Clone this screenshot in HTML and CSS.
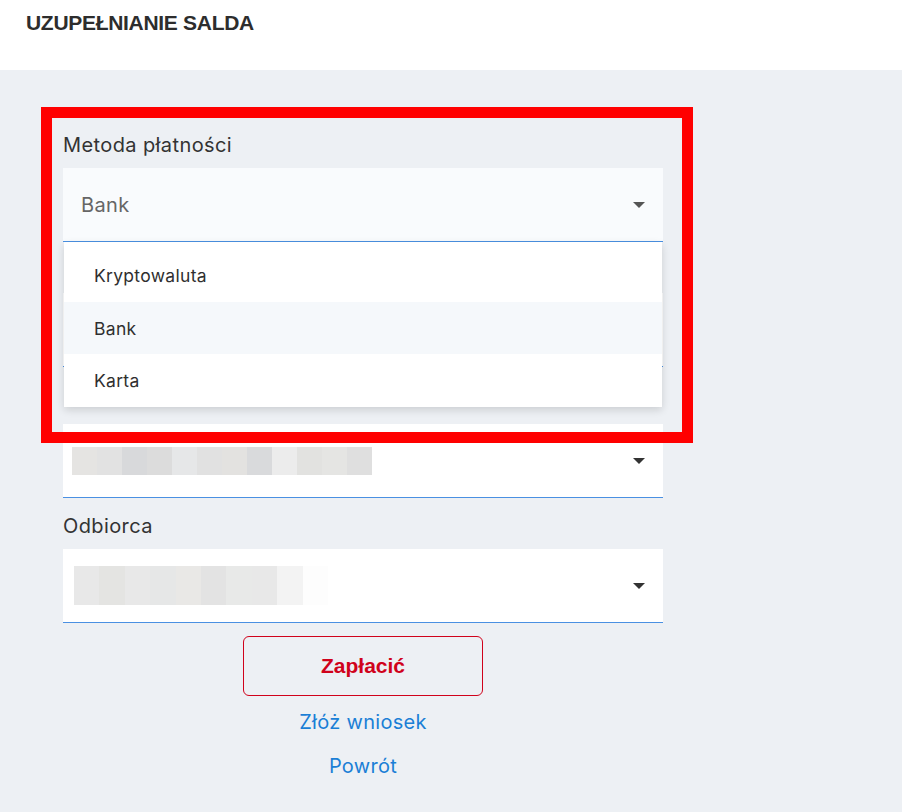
FILE: index.html
```html
<!DOCTYPE html>
<html lang="pl">
<head>
<meta charset="utf-8">
<title>Uzupełnianie salda</title>
<link rel="stylesheet" href="styles.css">
</head>
<body>
<header class="topbar">
  <h1 class="title">UZUPEŁNIANIE SALDA</h1>
</header>
<main class="content">
  <form class="form">
    <div class="field">
      <label class="label">Metoda płatności</label>
      <div class="select-wrap">
        <div class="select select-focused">
          <span class="select-value">Bank</span>
          <span class="caret caret-grey"></span>
        </div>
        <ul class="menu">
          <li class="menu-item">Kryptowaluta</li>
          <li class="menu-item menu-item-active">Bank</li>
          <li class="menu-item">Karta</li>
        </ul>
      </div>
    </div>
    <div class="field field-hidden">
      <div class="select">
        <span class="caret"></span>
      </div>
    </div>
    <div class="field field-nolabel">
      <div class="select">
        <div class="blur blur-a">
          <i style="background:#e5e4e2"></i><i style="background:#e2e2e2"></i><i style="background:#d8d9db"></i><i style="background:#dcdcdc"></i><i style="background:#e6e7e8"></i><i style="background:#e1e1e1"></i><i style="background:#e3e2e0"></i><i style="background:#d9dadc"></i><i style="background:#ececec"></i><i style="background:#e2e2e0"></i><i style="background:#e5e5e3"></i><i style="background:#dfdfdf"></i>
        </div>
        <span class="caret"></span>
      </div>
    </div>
    <div class="field">
      <label class="label">Odbiorca</label>
      <div class="select">
        <div class="blur blur-b">
          <i style="background:#e8e8e8"></i><i style="background:#e4e4e2"></i><i style="background:#e8e8e8"></i><i style="background:#e6e7e7"></i><i style="background:#e9e8e6"></i><i style="background:#e3e3e3"></i><i style="background:#e8e9e8"></i><i style="background:#e8e8e8"></i><i style="background:#f3f3f3"></i><i style="background:#fdfdfd"></i>
        </div>
        <span class="caret"></span>
      </div>
    </div>
    <div class="actions">
      <button type="button" class="btn-pay">Zapłacić</button>
      <a class="link" href="#">Złóż wniosek</a>
      <a class="link" href="#">Powrót</a>
    </div>
  </form>
  <div class="highlight"></div>
</main>
</body>
</html>
```

FILE: styles.css
```css
* { box-sizing: border-box; }
html, body { margin: 0; padding: 0; }
body {
  font-family: "Inter", "Noto Sans", sans-serif;
  color: #333;
  background: #edf0f4;
}
.topbar {
  height: 70px;
  background: #fff;
  padding: 11px 0 0 26px;
}
.title {
  margin: 0;
  font-family: "Liberation Sans", Arial, sans-serif;
  font-weight: bold;
  font-size: 21px;
  letter-spacing: -0.3px;
  line-height: 24px;
  color: #2d2d2d;
}
.content {
  position: relative;
  min-height: 742px;
  padding: 63px 0 0 63px;
}
.form {
  width: 600px;
  display: flex;
  flex-direction: column;
}
.field { display: flex; flex-direction: column; margin-bottom: 16px; }
.field-hidden { padding-top: 35px; }
.field-nolabel { margin-top: 41px; }
.label {
  font-size: 20px;
  letter-spacing: 0.4px;
  line-height: 24px;
  margin-bottom: 11px;
  color: #333;
}
.select-wrap { position: relative; }
.select {
  height: 74px;
  background: #fff;
  border-bottom: 1px solid #4a90e2;
  display: flex;
  align-items: center;
  justify-content: space-between;
  padding: 0 18px 0 18px;
}
.field-hidden .select { justify-content: flex-end; }
.select-focused { background: #f9fbfd; }
.select-value { font-size: 20px; letter-spacing: 0.4px; color: #666; }
.caret {
  width: 0; height: 0;
  border-left: 6px solid transparent;
  border-right: 6px solid transparent;
  border-top: 6px solid #333;
}
.caret-grey { border-top-color: #555; }
.menu {
  position: absolute;
  top: 100%;
  left: 1px;
  right: 1px;
  margin: 0;
  padding: 7px 0 0;
  list-style: none;
  background: #fff;
  box-shadow: 0 3px 8px rgba(0,0,0,0.14);
  z-index: 2;
}
.menu-item {
  height: 53px;
  display: flex;
  align-items: center;
  padding-left: 30px;
  font-size: 17.5px;
  letter-spacing: 0.3px;
  color: #2f2f2f;
}
.menu-item-active { background: #f5f8fb; height: 52px; }
.blur { display: flex; height: 28px; margin-left: -9px; }
.blur i { display: block; width: 25px; height: 100%; }
.blur-b { height: 39px; margin-left: -7px; }
.blur-b i { width: 25.4px; }
.actions {
  display: flex;
  flex-direction: column;
  align-items: center;
  margin-top: -3px;
}
.btn-pay {
  width: 240px;
  height: 60px;
  background: transparent;
  border: 1px solid #d0021b;
  border-radius: 6px;
  color: #d0021b;
  font-family: "Liberation Sans", Arial, sans-serif;
  font-weight: bold;
  font-size: 21px;
  cursor: pointer;
}
.link {
  margin-top: 14px;
  font-size: 20px;
  letter-spacing: 0.3px;
  line-height: 24px;
  color: #1b7fd6;
  text-decoration: none;
}
.link + .link { margin-top: 20px; }
.highlight {
  position: absolute;
  left: 41px;
  top: 37px;
  width: 652px;
  height: 336px;
  border: 11px solid #ff0000;
  pointer-events: none;
  z-index: 3;
}
```
